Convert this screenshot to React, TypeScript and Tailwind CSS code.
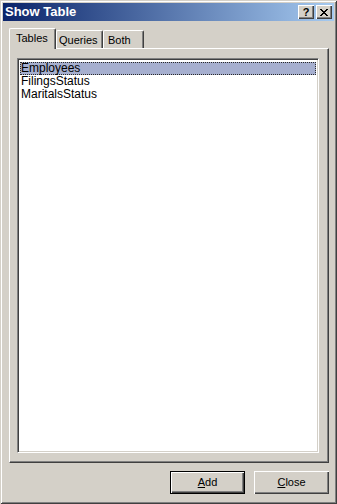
import React from 'react';

const raised =
  'bg-[#d4d0c8] shadow-[inset_1px_1px_#ffffff,inset_-1px_-1px_#404040,inset_-2px_-2px_#808080]';

const TitleButton = ({ children }: { children: React.ReactNode }) => (
  <div className={`w-[16px] h-[14px] flex items-center justify-center ${raised}`}>{children}</div>
);

const Tab = ({
  label,
  width,
  pad,
  active,
}: {
  label: string;
  width: string;
  pad: string;
  active?: boolean;
}) => (
  <div
    className={`${width} ${pad} ${
      active ? 'h-[21px] -mb-px z-10' : 'h-[18px]'
    } relative bg-[#d4d0c8] border-t border-l border-r border-t-white border-l-white border-r-[#404040] rounded-t-[2px] shadow-[inset_-1px_0_#808080] pt-[3px] text-[11px] leading-[13px] text-black`}
  >
    {label}
  </div>
);

const tables = ['Employees', 'FilingsStatus', 'MaritalsStatus'];

export default function App() {
  return (
    <div className="w-[337px] h-[504px] p-[3px] flex flex-col bg-[#d4d0c8] shadow-[inset_1px_1px_#d4d0c8,inset_-1px_-1px_#404040,inset_2px_2px_#ffffff,inset_-2px_-2px_#808080] font-['Liberation_Sans',Arial,sans-serif] select-none">
      {/* title bar */}
      <div className="h-[18px] flex items-center pl-[2px] pr-[2px] bg-[linear-gradient(to_right,#0a246a,#a6caf0)]">
        <span className="flex-1 text-white font-bold text-[13px] leading-[14px]">Show Table</span>
        <div className="flex gap-[2px]">
          <TitleButton>
            <span className="font-bold text-[11px] leading-[11px] text-black">?</span>
          </TitleButton>
          <TitleButton>
            <svg width="8" height="7" viewBox="0 0 8 7" shapeRendering="crispEdges">
              <path
                d="M0 0h2v1h-2zM6 0h2v1h-2zM1 1h2v1h-2zM5 1h2v1h-2zM2 2h4v1h-4zM3 3h2v1h-2zM2 4h4v1h-4zM1 5h2v1h-2zM5 5h2v1h-2zM0 6h2v1h-2zM6 6h2v1h-2z"
                fill="#000"
              />
            </svg>
          </TitleButton>
        </div>
      </div>

      {/* body */}
      <div className="flex-1 flex flex-col pt-[7px] pl-[6px] pr-[5px] pb-[7px]">
        <div className="h-[20px] flex items-end">
          <Tab label="Tables" width="w-[47px]" pad="pl-[6px]" active />
          <Tab label="Queries" width="w-[47px]" pad="pl-[2px]" />
          <Tab label="Both" width="w-[41px]" pad="pl-[4px]" />
        </div>

        <div className="flex-1 flex flex-col border-t border-l border-t-white border-l-white border-r border-b border-r-[#404040] border-b-[#404040] shadow-[inset_-1px_-1px_#808080] pt-[9px] pl-[7px] pr-[9px] pb-[9px]">
          <div className="flex-1 bg-white border-t border-l border-t-[#808080] border-l-[#808080] border-r border-b border-r-white border-b-white shadow-[inset_1px_1px_#404040,inset_-1px_-1px_#d4d0c8] pt-[3px] px-[2px]">
            {tables.map((t, i) => (
              <div
                key={t}
                className={`h-[13px] leading-[11px] text-[12px] text-black border ${
                  i === 0 ? 'bg-[#a6afcf] border-dotted border-[#2a2a2a]' : 'border-transparent'
                }`}
              >
                {t}
              </div>
            ))}
          </div>
        </div>

        <div className="mt-[8px] flex justify-end gap-[9px]">
          <button className="w-[75px] h-[23px] border border-black flex items-center justify-center p-0">
            <div className={`w-full h-full flex items-center justify-center text-[11px] text-black ${raised}`}>
              <span className="underline underline-offset-1">A</span>dd
            </div>
          </button>
          <button className={`w-[75px] h-[23px] flex items-center justify-center text-[11px] text-black ${raised}`}>
            <span className="underline underline-offset-1">C</span>lose
          </button>
        </div>
      </div>
    </div>
  );
}
